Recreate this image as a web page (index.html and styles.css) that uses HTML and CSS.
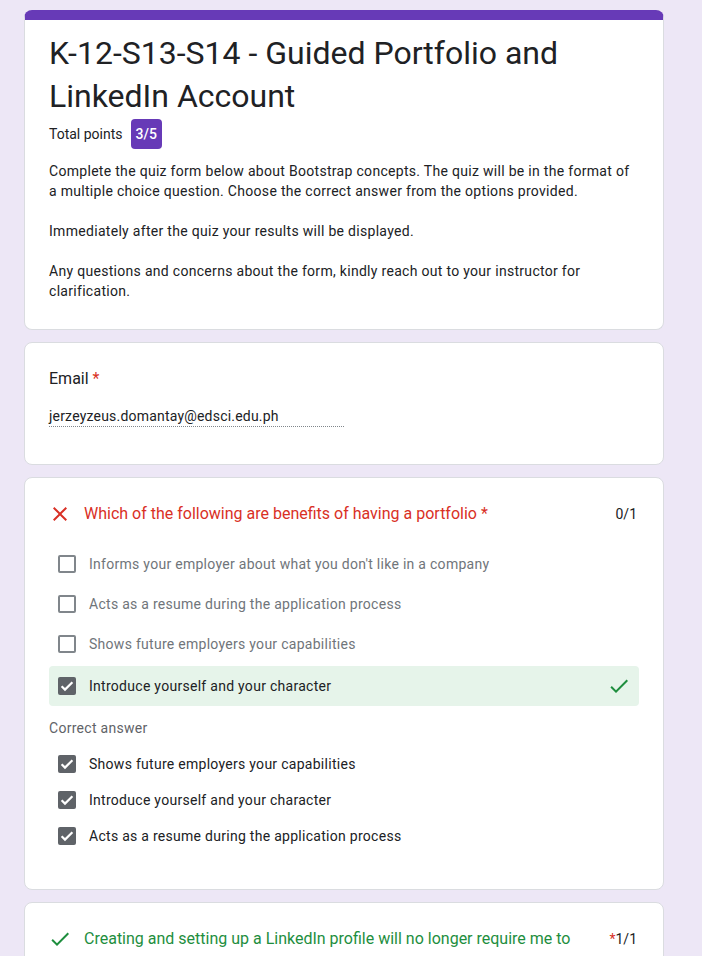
FILE: index.html
```html
<!DOCTYPE html>
<html lang="en">
<head>
<meta charset="utf-8">
<title>K-12-S13-S14 - Guided Portfolio and LinkedIn Account</title>
<link rel="stylesheet" href="styles.css">
</head>
<body>
<main class="form">
  <section class="card header-card">
    <h1 class="title">K-12-S13-S14 - Guided Portfolio and LinkedIn Account</h1>
    <div class="score-row">
      <span class="score-label">Total points</span>
      <span class="score-badge">3/5</span>
    </div>
    <div class="desc">
      <p>Complete the quiz form below about Bootstrap concepts. The quiz will be in the format of a multiple choice question. Choose the correct answer from the options provided.</p>
      <p>Immediately after the quiz your results will be displayed.</p>
      <p>Any questions and concerns about the form, kindly reach out to your instructor for clarification.</p>
    </div>
  </section>

  <section class="card email-card">
    <div class="email-label">Email <span class="req">*</span></div>
    <div class="email-value">jerzeyzeus.domantay@edsci.edu.ph</div>
  </section>

  <section class="card q-card">
    <div class="q-head">
      <svg class="q-icon" viewBox="0 0 24 24"><path fill="#d93025" d="M19 6.41L17.59 5 12 10.59 6.41 5 5 6.41 10.59 12 5 17.59 6.41 19 12 13.41 17.59 19 19 17.59 13.41 12z"/></svg>
      <div class="q-title wrong">Which of the following are benefits of having a portfolio *</div>
      <div class="q-points">0/1</div>
    </div>
    <div class="options">
      <div class="opt"><span class="box"></span><span class="opt-text muted">Informs your employer about what you don't like in a company</span></div>
      <div class="opt"><span class="box"></span><span class="opt-text muted">Acts as a resume during the application process</span></div>
      <div class="opt"><span class="box"></span><span class="opt-text muted">Shows future employers your capabilities</span></div>
      <div class="opt opt-correct">
        <span class="box checked"><svg viewBox="0 0 18 18"><path fill="none" stroke="#fff" stroke-width="2.2" d="M3.6 9.2l3.4 3.4 7.4-7.4"/></svg></span>
        <span class="opt-text">Introduce yourself and your character</span>
        <svg class="ok-icon" viewBox="0 0 24 24"><path fill="#1e8e3e" d="M9 16.17L4.83 12l-1.42 1.41L9 19 21 7l-1.41-1.41z"/></svg>
      </div>
    </div>
    <div class="correct-label">Correct answer</div>
    <div class="answers">
      <div class="ans"><span class="box checked"><svg viewBox="0 0 18 18"><path fill="none" stroke="#fff" stroke-width="2.2" d="M3.6 9.2l3.4 3.4 7.4-7.4"/></svg></span><span class="opt-text">Shows future employers your capabilities</span></div>
      <div class="ans"><span class="box checked"><svg viewBox="0 0 18 18"><path fill="none" stroke="#fff" stroke-width="2.2" d="M3.6 9.2l3.4 3.4 7.4-7.4"/></svg></span><span class="opt-text">Introduce yourself and your character</span></div>
      <div class="ans"><span class="box checked"><svg viewBox="0 0 18 18"><path fill="none" stroke="#fff" stroke-width="2.2" d="M3.6 9.2l3.4 3.4 7.4-7.4"/></svg></span><span class="opt-text">Acts as a resume during the application process</span></div>
    </div>
  </section>

  <section class="card q-card">
    <div class="q-head">
      <svg class="q-icon" viewBox="0 0 24 24"><path fill="#1e8e3e" d="M9 16.17L4.83 12l-1.42 1.41L9 19 21 7l-1.41-1.41z"/></svg>
      <div class="q-title right">Creating and setting up a LinkedIn profile will no longer require me to create a resume.</div>
      <div class="q-points"><span class="req">*</span>1/1</div>
    </div>
    <div class="options">
      <div class="opt"><span class="box"></span><span class="opt-text muted">True</span></div>
      <div class="opt"><span class="box"></span><span class="opt-text muted">False</span></div>
    </div>
  </section>
</main>
</body>
</html>
```

FILE: styles.css
```css
html, body {
  margin: 0;
  padding: 0;
}
body {
  background: #ede7f6;
  font-family: Roboto, "Noto Sans", Arial, sans-serif;
  color: #202124;
  height: 956px;
  overflow: hidden;
}
.form {
  width: 640px;
  margin-left: 24px;
  padding-top: 10px;
  display: flex;
  flex-direction: column;
  gap: 12px;
}
.card {
  background: #fff;
  border: 1px solid #dadce0;
  border-radius: 8px;
  padding: 24px;
}
.header-card {
  border-top: 10px solid #673ab7;
  padding-top: 12px;
  padding-bottom: 28px;
}
.title {
  margin: 0;
  font-size: 32px;
  line-height: 43px;
  font-weight: 400;
  color: #202124;
}
.score-row {
  display: flex;
  align-items: center;
  margin-top: 1px;
  height: 30px;
}
.score-label {
  font-size: 14px;
}
.score-badge {
  margin-left: 8px;
  background: #673ab7;
  color: #fff;
  font-size: 14px;
  font-weight: 500;
  border-radius: 4px;
  height: 30px;
  line-height: 30px;
  padding: 0 5px;
}
.desc {
  margin-top: 12px;
  font-size: 14px;
  line-height: 20px;
  letter-spacing: 0.3px;
}
.desc p {
  margin: 0 0 20px;
}
.desc p:last-child {
  margin-bottom: 0;
}
.email-card {
  padding-bottom: 37px;
}
.email-label {
  font-size: 16px;
  line-height: 24px;
}
.req {
  color: #d93025;
}
.email-value {
  margin-top: 15px;
  width: 295px;
  font-size: 14px;
  line-height: 20px;
  letter-spacing: 0.2px;
  border-bottom: 1px dotted #80868b;
}
.q-card {
  padding-bottom: 35px;
}
.q-head {
  display: flex;
  align-items: flex-start;
}
.q-icon {
  width: 24px;
  height: 24px;
  flex: none;
  margin-left: -1px;
}
.q-title {
  flex: 1;
  margin-left: 12px;
  margin-right: 14px;
  font-size: 16px;
  line-height: 24px;
}
.q-title.wrong {
  color: #d93025;
}
.q-title.right {
  color: #1e8e3e;
}
.q-points {
  font-size: 14px;
  line-height: 24px;
  margin-right: 2px;
  color: #202124;
}
.options {
  margin-top: 18px;
}
.opt {
  display: flex;
  align-items: center;
  height: 40px;
  padding-left: 9px;
  border-radius: 4px;
}
.opt-correct {
  margin-top: 2px;
  background: #e6f4ea;
  padding-right: 8px;
}
.box {
  width: 18px;
  height: 18px;
  box-sizing: border-box;
  border: 2px solid #80868b;
  border-radius: 2px;
  flex: none;
  display: flex;
}
.box.checked {
  border: none;
  background: #5f6368;
}
.box svg {
  width: 18px;
  height: 18px;
}
.opt-text {
  margin-left: 13px;
  font-size: 14px;
  line-height: 20px;
  letter-spacing: 0.28px;
  color: #202124;
}
.opt-text.muted {
  color: #70757a;
}
.ok-icon {
  width: 24px;
  height: 24px;
  margin-left: auto;
}
.correct-label {
  margin-top: 12px;
  font-size: 14px;
  line-height: 20px;
  letter-spacing: 0.28px;
  color: #5f6368;
}
.answers {
  margin-top: 8px;
}
.ans {
  display: flex;
  align-items: center;
  height: 36px;
  padding-left: 9px;
}
```
